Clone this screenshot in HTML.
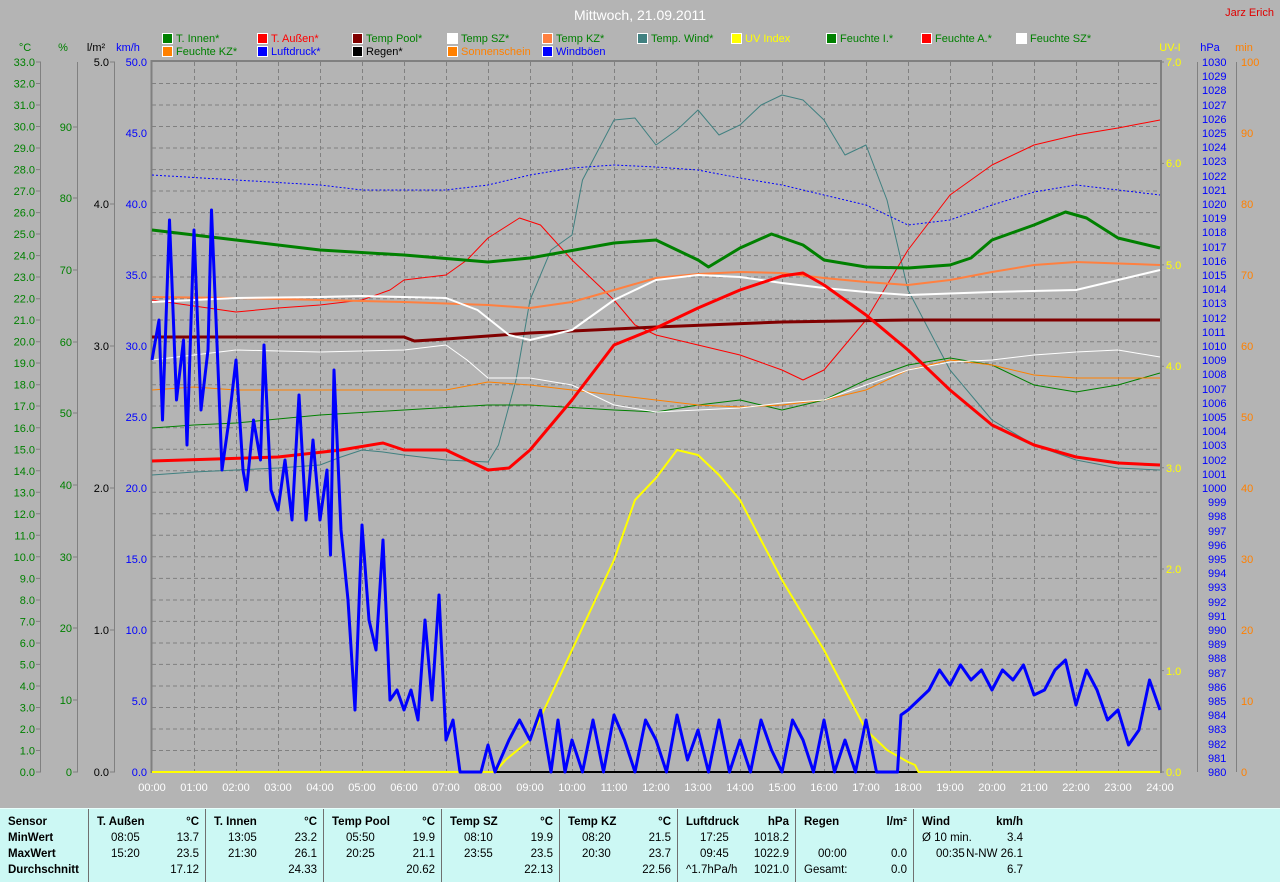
<!DOCTYPE html>
<html><head><meta charset="utf-8">
<style>
body{margin:0;width:1280px;height:881px;background:#b4b4b4;overflow:hidden;font-family:"Liberation Sans",Arial,sans-serif;}
svg{position:absolute;left:0;top:0}
svg text{font-family:"Liberation Sans",Arial,sans-serif;font-size:11px}
.tbl{position:absolute;left:0;top:808px;width:1280px;height:73px;background:#ccf8f4;border-top:1px solid #e8fffc}
.c{position:absolute;top:0;height:73px;border-right:1px solid #707070;font-size:11.5px;color:#000}
.r{position:absolute;left:8px;right:6px;height:16px;white-space:pre}
.b{font-weight:bold}
.t{position:absolute;right:0}
.m{position:absolute;left:14px}
</style></head><body>
<svg width="1280" height="881" viewBox="0 0 1280 881">
<text x="640" y="20" fill="#fff" font-size="14" style="font-size:14px" text-anchor="middle">Mittwoch, 21.09.2011</text>
<text x="1274" y="16" fill="#e00000" text-anchor="end">Jarz Erich</text>
<!-- legend -->
<g stroke="#fff" stroke-width="1">
<rect x="162.5" y="33.5" width="10" height="10" fill="#008000"/><rect x="257.5" y="33.5" width="10" height="10" fill="#ff0000"/><rect x="352.5" y="33.5" width="10" height="10" fill="#800000"/><rect x="447.5" y="33.5" width="10" height="10" fill="#ffffff"/><rect x="542.5" y="33.5" width="10" height="10" fill="#ff8040"/><rect x="637.5" y="33.5" width="10" height="10" fill="#408080"/><rect x="731.5" y="33.5" width="10" height="10" fill="#ffff00"/><rect x="826.5" y="33.5" width="10" height="10" fill="#008000"/><rect x="921.5" y="33.5" width="10" height="10" fill="#ff0000"/><rect x="1016.5" y="33.5" width="10" height="10" fill="#ffffff"/>
<rect x="162.5" y="46.5" width="10" height="10" fill="#ff8000"/><rect x="257.5" y="46.5" width="10" height="10" fill="#0000ff"/><rect x="352.5" y="46.5" width="10" height="10" fill="#000"/><rect x="447.5" y="46.5" width="10" height="10" fill="#ff8000"/><rect x="542.5" y="46.5" width="10" height="10" fill="#0000ff"/>
</g>
<g font-size="11">
<text x="176" y="42" fill="#008000">T. Innen*</text><text x="271" y="42" fill="#ff0000">T. Außen*</text><text x="366" y="42" fill="#008000">Temp Pool*</text><text x="461" y="42" fill="#008000">Temp SZ*</text><text x="556" y="42" fill="#008000">Temp KZ*</text><text x="651" y="42" fill="#008000">Temp. Wind*</text><text x="745" y="42" fill="#ffff00">UV Index</text><text x="840" y="42" fill="#008000">Feuchte I.*</text><text x="935" y="42" fill="#008000">Feuchte A.*</text><text x="1030" y="42" fill="#008000">Feuchte SZ*</text>
<text x="176" y="55" fill="#008000">Feuchte KZ*</text><text x="271" y="55" fill="#0000ff">Luftdruck*</text><text x="366" y="55" fill="#000">Regen*</text><text x="461" y="55" fill="#ff8000">Sonnenschein</text><text x="556" y="55" fill="#0000ff">Windböen</text>
</g>
<!-- axis titles -->
<text x="25" y="51" fill="#008000" text-anchor="middle">°C</text>
<text x="63" y="51" fill="#008000" text-anchor="middle">%</text>
<text x="96" y="51" fill="#000" text-anchor="middle">l/m²</text>
<text x="128" y="51" fill="#0000ff" text-anchor="middle">km/h</text>
<text x="1170" y="51" fill="#ffff00" text-anchor="middle">UV-I</text>
<text x="1210" y="51" fill="#0000ff" text-anchor="middle">hPa</text>
<text x="1244" y="51" fill="#ff8000" text-anchor="middle">min</text>
<!-- axis lines -->
<g stroke="#808080" stroke-width="1">
<line x1="40.5" y1="62" x2="40.5" y2="772"/><line x1="77.5" y1="62" x2="77.5" y2="772"/><line x1="114.5" y1="62" x2="114.5" y2="772"/>
<line x1="1197.5" y1="62" x2="1197.5" y2="772"/><line x1="1236.5" y1="62" x2="1236.5" y2="772"/>
</g>
<!-- °C labels -->
<g fill="#008000" text-anchor="end">
<text x="35" y="66">33.0</text><text x="35" y="87.5">32.0</text><text x="35" y="109">31.0</text><text x="35" y="130.5">30.0</text><text x="35" y="152">29.0</text><text x="35" y="173.6">28.0</text><text x="35" y="195">27.0</text><text x="35" y="216.6">26.0</text><text x="35" y="238">25.0</text><text x="35" y="259.6">24.0</text><text x="35" y="281">23.0</text><text x="35" y="302.7">22.0</text><text x="35" y="324">21.0</text><text x="35" y="345.7">20.0</text><text x="35" y="367">19.0</text><text x="35" y="388.7">18.0</text><text x="35" y="410">17.0</text><text x="35" y="431.8">16.0</text><text x="35" y="453.3">15.0</text><text x="35" y="474.8">14.0</text><text x="35" y="496.3">13.0</text><text x="35" y="517.8">12.0</text><text x="35" y="539.3">11.0</text><text x="35" y="560.8">10.0</text><text x="35" y="582.4">9.0</text><text x="35" y="603.9">8.0</text><text x="35" y="625.4">7.0</text><text x="35" y="646.9">6.0</text><text x="35" y="668.4">5.0</text><text x="35" y="689.9">4.0</text><text x="35" y="711.5">3.0</text><text x="35" y="733">2.0</text><text x="35" y="754.5">1.0</text><text x="35" y="776">0.0</text>
</g>
<g stroke="#808080"><path d="M36 62h5M36 83.5h5M36 105h5M36 126.5h5M36 148h5M36 169.6h5M36 191h5M36 212.6h5M36 234h5M36 255.6h5M36 277h5M36 298.7h5M36 320h5M36 341.7h5M36 363h5M36 384.7h5M36 406h5M36 427.8h5M36 449.3h5M36 470.8h5M36 492.3h5M36 513.8h5M36 535.3h5M36 556.8h5M36 578.4h5M36 600h5M36 621.4h5M36 643h5M36 664.4h5M36 686h5M36 707.5h5M36 729h5M36 750.5h5M36 772h5"/></g>
<!-- % labels -->
<g fill="#008000" text-anchor="end">
<text x="72" y="131">90</text><text x="72" y="202">80</text><text x="72" y="274">70</text><text x="72" y="346">60</text><text x="72" y="417">50</text><text x="72" y="489">40</text><text x="72" y="561">30</text><text x="72" y="632">20</text><text x="72" y="704">10</text><text x="72" y="776">0</text>
</g>
<g stroke="#808080"><path d="M73 127h5M73 198h5M73 270h5M73 342h5M73 413h5M73 485h5M73 557h5M73 628h5M73 700h5M73 772h5"/></g>
<!-- l/m2 -->
<g fill="#000" text-anchor="end">
<text x="109" y="66">5.0</text><text x="109" y="208">4.0</text><text x="109" y="350">3.0</text><text x="109" y="492">2.0</text><text x="109" y="634">1.0</text><text x="109" y="776">0.0</text>
</g>
<g stroke="#808080"><path d="M110 62h5M110 204h5M110 346h5M110 488h5M110 630h5M110 772h5"/></g>
<!-- km/h -->
<g fill="#0000ff" text-anchor="end">
<text x="147" y="66">50.0</text><text x="147" y="137">45.0</text><text x="147" y="208">40.0</text><text x="147" y="279">35.0</text><text x="147" y="350">30.0</text><text x="147" y="421">25.0</text><text x="147" y="492">20.0</text><text x="147" y="563">15.0</text><text x="147" y="634">10.0</text><text x="147" y="705">5.0</text><text x="147" y="776">0.0</text>
</g>
<!-- UV -->
<g fill="#ffff00">
<text x="1166" y="66">7.0</text><text x="1166" y="167">6.0</text><text x="1166" y="269">5.0</text><text x="1166" y="370">4.0</text><text x="1166" y="472">3.0</text><text x="1166" y="573">2.0</text><text x="1166" y="675">1.0</text><text x="1166" y="776">0.0</text>
</g>
<g stroke="#808080"><path d="M1160 62h4M1160 163.4h4M1160 264.9h4M1160 366.3h4M1160 467.7h4M1160 569h4M1160 670.6h4M1160 772h4"/></g>
<!-- hPa -->
<g fill="#0000ff" font-size="10.5">
<text x="1202" y="66">1030</text><text x="1202" y="80">1029</text><text x="1202" y="94">1028</text><text x="1202" y="109">1027</text><text x="1202" y="123">1026</text><text x="1202" y="137">1025</text><text x="1202" y="151">1024</text><text x="1202" y="165">1023</text><text x="1202" y="180">1022</text><text x="1202" y="194">1021</text><text x="1202" y="208">1020</text><text x="1202" y="222">1019</text><text x="1202" y="236">1018</text><text x="1202" y="251">1017</text><text x="1202" y="265">1016</text><text x="1202" y="279">1015</text><text x="1202" y="293">1014</text><text x="1202" y="307">1013</text><text x="1202" y="322">1012</text><text x="1202" y="336">1011</text><text x="1202" y="350">1010</text><text x="1202" y="364">1009</text><text x="1202" y="378">1008</text><text x="1202" y="393">1007</text><text x="1202" y="407">1006</text><text x="1202" y="421">1005</text><text x="1202" y="435">1004</text><text x="1202" y="449">1003</text><text x="1202" y="464">1002</text><text x="1202" y="478">1001</text><text x="1202" y="492">1000</text><text x="1208" y="506">999</text><text x="1208" y="520">998</text><text x="1208" y="535">997</text><text x="1208" y="549">996</text><text x="1208" y="563">995</text><text x="1208" y="577">994</text><text x="1208" y="591">993</text><text x="1208" y="606">992</text><text x="1208" y="620">991</text><text x="1208" y="634">990</text><text x="1208" y="648">989</text><text x="1208" y="662">988</text><text x="1208" y="677">987</text><text x="1208" y="691">986</text><text x="1208" y="705">985</text><text x="1208" y="719">984</text><text x="1208" y="733">983</text><text x="1208" y="748">982</text><text x="1208" y="762">981</text><text x="1208" y="776">980</text>
</g>
<!-- min -->
<g fill="#ff8000">
<text x="1241" y="66">100</text><text x="1241" y="137">90</text><text x="1241" y="208">80</text><text x="1241" y="279">70</text><text x="1241" y="350">60</text><text x="1241" y="421">50</text><text x="1241" y="492">40</text><text x="1241" y="563">30</text><text x="1241" y="634">20</text><text x="1241" y="705">10</text><text x="1241" y="776">0</text>
</g>
<!-- plot frame -->
<line x1="151.5" y1="60" x2="151.5" y2="773" stroke="#808080" stroke-width="2"/>
<line x1="151" y1="61" x2="1162" y2="61" stroke="#808080" stroke-width="2"/>
<line x1="1161" y1="60" x2="1161" y2="773" stroke="#808080" stroke-width="2"/>
<!-- grid -->
<g stroke="#808080" stroke-dasharray="4,3" stroke-width="1">
<path d="M152 83.5h1008M152 105h1008M152 126.5h1008M152 148h1008M152 169.6h1008M152 191h1008M152 212.6h1008M152 234h1008M152 255.6h1008M152 277h1008M152 298.7h1008M152 320h1008M152 341.7h1008M152 363h1008M152 384.7h1008M152 406h1008M152 427.8h1008M152 449.3h1008M152 470.8h1008M152 492.3h1008M152 513.8h1008M152 535.3h1008M152 556.8h1008M152 578.4h1008M152 600h1008M152 621.4h1008M152 643h1008M152 664.4h1008M152 686h1008M152 707.5h1008M152 729h1008M152 750.5h1008"/>
<path d="M194.5 62v710M236.5 62v710M278.5 62v710M320.5 62v710M362.5 62v710M404.5 62v710M446.5 62v710M488.5 62v710M530.5 62v710M572.5 62v710M614.5 62v710M656.5 62v710M698.5 62v710M740.5 62v710M782.5 62v710M824.5 62v710M866.5 62v710M908.5 62v710M950.5 62v710M992.5 62v710M1034.5 62v710M1076.5 62v710M1118.5 62v710"/>
</g>
<!-- x labels -->
<g fill="#fff" text-anchor="middle">
<text x="152" y="791">00:00</text><text x="194" y="791">01:00</text><text x="236" y="791">02:00</text><text x="278" y="791">03:00</text><text x="320" y="791">04:00</text><text x="362" y="791">05:00</text><text x="404" y="791">06:00</text><text x="446" y="791">07:00</text><text x="488" y="791">08:00</text><text x="530" y="791">09:00</text><text x="572" y="791">10:00</text><text x="614" y="791">11:00</text><text x="656" y="791">12:00</text><text x="698" y="791">13:00</text><text x="740" y="791">14:00</text><text x="782" y="791">15:00</text><text x="824" y="791">16:00</text><text x="866" y="791">17:00</text><text x="908" y="791">18:00</text><text x="950" y="791">19:00</text><text x="992" y="791">20:00</text><text x="1034" y="791">21:00</text><text x="1076" y="791">22:00</text><text x="1118" y="791">23:00</text><text x="1160" y="791">24:00</text>
</g>
<!-- data -->
<g transform="translate(152 0) scale(0.7 1)" fill="none" stroke-linejoin="round">
<!-- Regen -->
<polyline vector-effect="non-scaling-stroke" stroke="#000" stroke-width="2" points="490,772 1440,772"/>
<!-- UV -->
<polyline vector-effect="non-scaling-stroke" stroke="#ffff00" stroke-width="2" points="0,772 490,772 505,760 540,740 600,650 660,560 690,500 720,478 750,450 780,455 810,475 840,500 900,580 960,650 1020,730 1050,750 1080,762 1090,765 1095,772 1440,772"/>
<!-- Temp Wind -->
<polyline vector-effect="non-scaling-stroke" stroke="#408080" stroke-width="1" points="0,475 60,472 120,470 180,468 240,465 270,457 300,450 330,452 360,455 420,460 480,462 495,445 520,380 540,300 570,250 600,235 615,180 630,160 660,120 690,118 720,145 750,130 780,110 810,135 840,125 870,105 900,95 930,100 960,120 990,155 1020,145 1050,200 1080,290 1110,330 1140,370 1200,420 1260,445 1320,460 1380,468 1440,470"/>
<!-- Feuchte I. -->
<polyline vector-effect="non-scaling-stroke" stroke="#008000" stroke-width="1" points="0,428 60,425 120,423 240,415 360,410 480,405 540,405 660,410 720,412 780,405 840,400 870,405 900,410 960,400 1020,380 1080,365 1140,358 1200,365 1260,385 1320,392 1380,385 1440,373"/>
<!-- Feuchte KZ -->
<polyline vector-effect="non-scaling-stroke" stroke="#ff8000" stroke-width="1" points="0,390 60,387 120,390 420,390 450,386 480,382 540,385 600,390 660,395 720,400 780,405 840,407 900,405 960,400 1020,390 1080,370 1140,360 1200,365 1260,375 1320,378 1440,378"/>
<!-- Feuchte SZ -->
<polyline vector-effect="non-scaling-stroke" stroke="#ffffff" stroke-width="1" points="0,360 60,355 120,350 240,352 360,350 420,345 450,360 480,378 540,378 600,385 660,405 720,412 780,410 840,408 900,403 960,400 1020,385 1080,370 1140,362 1200,360 1260,355 1320,352 1380,350 1440,357"/>
<!-- Feuchte A. -->
<polyline vector-effect="non-scaling-stroke" stroke="#ff0000" stroke-width="1" points="0,300 60,306 120,312 180,308 240,305 300,300 340,290 360,280 420,275 450,260 480,238 525,218 555,225 600,260 660,300 690,325 720,335 780,345 840,355 900,370 930,380 960,370 1020,320 1080,250 1140,195 1200,165 1260,145 1320,135 1380,128 1440,120"/>
<!-- Luftdruck -->
<polyline vector-effect="non-scaling-stroke" stroke="#0000ff" stroke-width="1" stroke-dasharray="2,2" points="0,175 120,180 240,185 300,190 420,190 480,185 540,175 600,168 660,165 720,167 780,170 840,178 900,185 960,195 1020,205 1080,225 1140,220 1200,205 1260,192 1320,185 1380,190 1440,195"/>
<!-- Temp Pool -->
<polyline vector-effect="non-scaling-stroke" stroke="#800000" stroke-width="3" points="0,337 360,337 375,341 420,339 540,333 720,327 900,322 1080,320 1440,320"/>
<!-- Temp KZ -->
<polyline vector-effect="non-scaling-stroke" stroke="#ff8040" stroke-width="2" points="0,297 120,298 240,300 360,302 480,305 540,308 600,302 660,290 720,278 780,274 840,272 900,273 960,278 1020,282 1080,285 1140,280 1200,272 1260,265 1320,262 1440,265"/>
<!-- Temp SZ -->
<polyline vector-effect="non-scaling-stroke" stroke="#ffffff" stroke-width="2" points="0,302 120,298 240,297 300,296 420,298 465,310 510,335 540,340 600,330 660,300 720,280 780,275 840,277 900,283 960,288 1020,292 1080,295 1200,292 1320,290 1350,285 1380,280 1440,270"/>
<!-- T Innen -->
<polyline vector-effect="non-scaling-stroke" stroke="#008000" stroke-width="3" points="0,230 120,240 240,250 360,255 480,262 540,258 660,243 720,240 780,260 795,267 840,248 885,234 930,245 960,260 1020,267 1080,268 1140,265 1170,258 1200,240 1260,225 1305,212 1335,218 1380,238 1440,248"/>
<!-- T Außen -->
<polyline vector-effect="non-scaling-stroke" stroke="#ff0000" stroke-width="3" points="0,461 180,457 270,450 330,443 360,450 420,450 480,470 510,468 540,450 600,400 660,345 720,328 780,308 840,290 900,276 930,273 960,285 1020,315 1080,350 1140,390 1200,425 1260,445 1320,457 1380,463 1440,465"/>
<!-- Windböen -->
<polyline vector-effect="non-scaling-stroke" stroke="#0000ff" stroke-width="3" points="0,360 10,320 15,420 25,220 35,400 45,340 50,445 60,230 70,410 80,350 85,210 95,380 100,470 110,420 120,360 130,470 135,490 145,420 155,460 160,345 170,490 180,510 190,460 200,520 210,395 220,520 230,440 240,520 250,470 255,555 260,370 270,530 280,600 290,710 300,525 310,620 320,650 330,540 340,700 350,690 360,710 370,690 380,720 390,620 400,700 410,595 420,740 430,720 440,772 470,772 480,745 490,772 510,740 525,720 540,740 555,710 570,772 580,720 590,772 600,740 615,772 630,720 645,772 660,715 675,740 690,772 705,720 720,740 735,772 750,715 765,760 780,730 795,772 810,720 825,772 840,740 855,772 870,720 885,750 900,772 915,720 930,740 945,772 960,720 975,772 990,740 1005,772 1020,720 1035,772 1065,772 1070,715 1080,710 1095,700 1110,690 1125,670 1140,685 1155,665 1170,680 1185,670 1200,690 1215,670 1230,680 1245,665 1260,695 1275,690 1290,670 1305,660 1320,705 1335,670 1350,690 1365,720 1380,710 1395,745 1410,730 1425,680 1440,710"/>
</g>
</svg>
<div class="tbl">
 <div class="c" style="left:0;width:88px"><div class="r b" style="top:7px">Sensor</div><div class="r b" style="top:23px">MinWert</div><div class="r b" style="top:39px">MaxWert</div><div class="r b" style="top:55px">Durchschnitt</div></div>
 <div class="c" style="left:89px;width:116px"><div class="r b" style="top:7px">T. Außen<span class="t">°C</span></div><div class="r" style="top:23px"><span class="m">08:05</span><span class="t">13.7</span></div><div class="r" style="top:39px"><span class="m">15:20</span><span class="t">23.5</span></div><div class="r" style="top:55px"><span class="t">17.12</span></div></div>
 <div class="c" style="left:206px;width:117px"><div class="r b" style="top:7px">T. Innen<span class="t">°C</span></div><div class="r" style="top:23px"><span class="m">13:05</span><span class="t">23.2</span></div><div class="r" style="top:39px"><span class="m">21:30</span><span class="t">26.1</span></div><div class="r" style="top:55px"><span class="t">24.33</span></div></div>
 <div class="c" style="left:324px;width:117px"><div class="r b" style="top:7px">Temp Pool<span class="t">°C</span></div><div class="r" style="top:23px"><span class="m">05:50</span><span class="t">19.9</span></div><div class="r" style="top:39px"><span class="m">20:25</span><span class="t">21.1</span></div><div class="r" style="top:55px"><span class="t">20.62</span></div></div>
 <div class="c" style="left:442px;width:117px"><div class="r b" style="top:7px">Temp SZ<span class="t">°C</span></div><div class="r" style="top:23px"><span class="m">08:10</span><span class="t">19.9</span></div><div class="r" style="top:39px"><span class="m">23:55</span><span class="t">23.5</span></div><div class="r" style="top:55px"><span class="t">22.13</span></div></div>
 <div class="c" style="left:560px;width:117px"><div class="r b" style="top:7px">Temp KZ<span class="t">°C</span></div><div class="r" style="top:23px"><span class="m">08:20</span><span class="t">21.5</span></div><div class="r" style="top:39px"><span class="m">20:30</span><span class="t">23.7</span></div><div class="r" style="top:55px"><span class="t">22.56</span></div></div>
 <div class="c" style="left:678px;width:117px"><div class="r b" style="top:7px">Luftdruck<span class="t">hPa</span></div><div class="r" style="top:23px"><span class="m">17:25</span><span class="t">1018.2</span></div><div class="r" style="top:39px"><span class="m">09:45</span><span class="t">1022.9</span></div><div class="r" style="top:55px">^1.7hPa/h<span class="t">1021.0</span></div></div>
 <div class="c" style="left:796px;width:117px"><div class="r b" style="top:7px">Regen<span class="t">l/m²</span></div><div class="r" style="top:39px"><span class="m">00:00</span><span class="t">0.0</span></div><div class="r" style="top:55px">Gesamt:<span class="t">0.0</span></div></div>
 <div class="c" style="left:914px;width:115px;border-right:none"><div class="r b" style="top:7px">Wind<span class="t">km/h</span></div><div class="r" style="top:23px">Ø 10 min.<span class="t">3.4</span></div><div class="r" style="top:39px"><span class="m">00:35</span><span class="t">N-NW 26.1</span></div><div class="r" style="top:55px"><span class="t">6.7</span></div></div>
</div>
</body></html>
